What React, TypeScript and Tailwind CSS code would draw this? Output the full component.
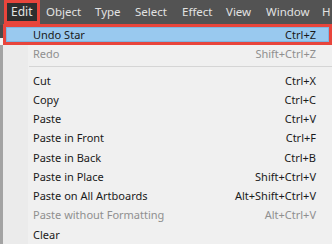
import React from "react";

type Item = { label: string; shortcut?: string; disabled?: boolean };

const top: Item[] = [
  { label: "Undo Star", shortcut: "Ctrl+Z" },
  { label: "Redo", shortcut: "Shift+Ctrl+Z", disabled: true },
];

const bottom: Item[] = [
  { label: "Cut", shortcut: "Ctrl+X" },
  { label: "Copy", shortcut: "Ctrl+C" },
  { label: "Paste", shortcut: "Ctrl+V" },
  { label: "Paste in Front", shortcut: "Ctrl+F" },
  { label: "Paste in Back", shortcut: "Ctrl+B" },
  { label: "Paste in Place", shortcut: "Shift+Ctrl+V" },
  { label: "Paste on All Artboards", shortcut: "Alt+Shift+Ctrl+V" },
  { label: "Paste without Formatting", shortcut: "Alt+Ctrl+V", disabled: true },
  { label: "Clear" },
];

function Row({ item, active }: { item: Item; active?: boolean }) {
  return (
    <div
      className={
        "flex h-[19.25px] items-center justify-between pl-[30px] pr-[16px] " +
        (active ? "bg-[#99c9ef]" : "")
      }
    >
      <span className={item.disabled ? "text-[#8f8f8f]" : "text-[#1a1a1a]"}>{item.label}</span>
      {item.shortcut && (
        <span className={item.disabled ? "text-[#8f8f8f]" : "text-[#1a1a1a]"}>{item.shortcut}</span>
      )}
    </div>
  );
}

export default function App() {
  return (
    <div
      className="relative h-[244px] w-[332px] overflow-hidden bg-[#f0f0f0] text-[11px] leading-none"
      style={{ fontFamily: '"Noto Sans", "Open Sans", sans-serif' }}
    >
      <div className="flex h-[25px] items-start bg-[#535353] text-[#e2e2e2]">
        <div className="ml-[4px] flex h-[24px] w-[36px] items-center border-[3px] border-[#e8453c] bg-[#2f2f2f] pl-[4px] text-[12px]">
          Edit
        </div>
        <div className="ml-[6px] flex h-[24px] items-center text-[11.5px]">
          <span className="w-[49px]">Object</span>
          <span className="w-[40px]">Type</span>
          <span className="w-[47px]">Select</span>
          <span className="w-[44px]">Effect</span>
          <span className="w-[40px]">View</span>
          <span className="w-[56px]">Window</span>
          <span>H</span>
        </div>
      </div>
      <div className="flex">
        <div className="flex w-[3px] flex-col">
          <div className="h-[13px] bg-[#4a4a4a]" />
          <div className="h-[7px] bg-[#f4f4f4]" />
          <div className="flex-1 bg-[#a3a3a3]" />
        </div>
        <div className="relative flex-1">
          <div className="absolute left-0 top-0 h-full w-[25px] bg-[#ebebeb]" />
          <div className="relative">
            {top.map((it, i) => (
              <Row key={it.label} item={it} active={i === 0} />
            ))}
            <div className="flex h-[7px] items-center pl-[26px]">
              <div className="h-[2px] w-full border-t border-[#d5d5d5] border-b-white" />
            </div>
            {bottom.map((it) => (
              <Row key={it.label} item={it} />
            ))}
          </div>
        </div>
      </div>
      <div className="pointer-events-none absolute left-[3px] top-[24px] h-[21px] w-[329px] border-[3px] border-[#e8453c]" />
      <div className="pointer-events-none absolute left-[6px] top-[27px] h-[15px] w-[323px] border border-[#7fb4e0]" />
    </div>
  );
}
